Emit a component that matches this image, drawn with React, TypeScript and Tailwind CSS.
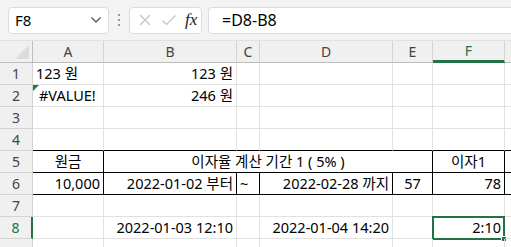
import React from "react";

const font = "font-['Noto_Sans','Noto_Sans_CJK_KR',sans-serif]";

type CellProps = {
  children?: React.ReactNode;
  className?: string;
};

function Cell({ children, className = "" }: CellProps) {
  return (
    <div
      className={`relative flex h-[22px] items-center overflow-visible whitespace-nowrap border-b border-r border-[#e1e1e1] px-[3px] text-[14.5px] leading-none text-black ${className}`}
    >
      {children}
    </div>
  );
}

function RowHead({ n, className = "" }: { n?: number; className?: string }) {
  return (
    <div
      className={`flex h-[22px] items-center justify-center border-b border-r border-[#d4d4d4] bg-[#f0f0f0] text-[14px] text-[#444] ${className}`}
    >
      {n}
    </div>
  );
}

function ColHead({ label, className = "" }: { label: string; className?: string }) {
  return (
    <div
      className={`flex h-[22px] items-center justify-center border-b border-r border-[#d4d4d4] bg-[#f0f0f0] text-[14px] text-[#444] ${className}`}
    >
      {label}
    </div>
  );
}

export default function App() {
  return (
    <div className={`h-[247px] w-[511px] overflow-hidden bg-white ${font}`}>
      {/* formula bar */}
      <div className="flex h-[41px] items-center border-b border-[#e1e1e1] bg-[#f3f3f3] pl-[8px]">
        <div className="flex h-[27px] w-[101px] items-center justify-between rounded-[4px] border border-[#dcdcdc] bg-white pl-[6px] pr-[6px]">
          <span className="text-[15px] text-black">F8</span>
          <svg width="12" height="8" viewBox="0 0 12 8" fill="none" stroke="#555" strokeWidth="1.3">
            <path d="M1.5 1.5 L6 6 L10.5 1.5" />
          </svg>
        </div>
        <div className="mx-[9px] flex flex-col gap-[3px]">
          <span className="h-[2px] w-[2px] bg-[#999]" />
          <span className="h-[2px] w-[2px] bg-[#999]" />
          <span className="h-[2px] w-[2px] bg-[#999]" />
        </div>
        <div className="flex h-[27px] w-[73px] items-center rounded-[4px] border border-[#dcdcdc] bg-white pl-[8px]">
          <svg width="14" height="14" viewBox="0 0 14 14" fill="none" stroke="#c2c2c2" strokeWidth="1.2">
            <path d="M2 2 L12 12 M12 2 L2 12" />
          </svg>
          <svg className="ml-[9px]" width="16" height="14" viewBox="0 0 16 14" fill="none" stroke="#c2c2c2" strokeWidth="1.2">
            <path d="M1.5 7.5 L5.5 11.5 L14.5 2.5" />
          </svg>
          <span className="ml-[8px] font-['Liberation_Serif',serif] text-[17px] italic text-[#222]">fx</span>
        </div>
        <div className="ml-[6px] flex h-[27px] flex-1 items-center rounded-l-[4px] border border-r-0 border-[#dcdcdc] bg-white pl-[13px]">
          <span className="text-[16px] text-black">=D8-B8</span>
        </div>
      </div>

      {/* sheet */}
      <div className="grid grid-cols-[33px_71px_133px_23px_133px_40px_72px_1fr]">
        {/* header */}
        <div className="relative h-[22px] border-b border-r border-[#bdbdbd] bg-[#f0f0f0]">
          <div className="absolute bottom-[3px] right-[3px] h-0 w-0 border-b-[14px] border-l-[14px] border-b-[#dcdcdc] border-l-transparent" />
        </div>
        <ColHead label="A" className="border-b-[#bdbdbd]" />
        <ColHead label="B" className="border-b-[#bdbdbd]" />
        <ColHead label="C" className="border-b-[#bdbdbd]" />
        <ColHead label="D" className="border-b-[#bdbdbd]" />
        <ColHead label="E" className="border-b-[#bdbdbd]" />
        <ColHead label="F" className="border-b-[3px] border-b-[#217346] bg-[#e0e0e0] text-[#217346]" />
        <ColHead label="" className="border-b-[#bdbdbd]" />

        {/* row 1 */}
        <RowHead n={1} />
        <Cell>123 원</Cell>
        <Cell className="justify-end">123 원</Cell>
        <Cell />
        <Cell />
        <Cell />
        <Cell />
        <Cell />

        {/* row 2 */}
        <RowHead n={2} />
        <Cell className="pl-[6px]">
          <div className="absolute left-0 top-0 h-0 w-0 border-r-[6px] border-t-[6px] border-r-transparent border-t-[#1e7b3c]" />
          #VALUE!
        </Cell>
        <Cell className="justify-end">246 원</Cell>
        <Cell />
        <Cell />
        <Cell />
        <Cell />
        <Cell />

        {/* row 3 */}
        <RowHead n={3} />
        <Cell />
        <Cell />
        <Cell />
        <Cell />
        <Cell />
        <Cell />
        <Cell />

        {/* row 4 */}
        <RowHead n={4} />
        <Cell className="border-b-black" />
        <Cell className="border-b-black" />
        <Cell className="border-b-black" />
        <Cell className="border-b-black" />
        <Cell className="border-b-black" />
        <Cell className="border-b-black" />
        <Cell className="border-b-black" />

        {/* row 5 */}
        <RowHead n={5} className="bg-[#9fd5b7]" />
        <Cell className="justify-center border-b-black border-r-black">원금</Cell>
        <Cell className="col-span-4 justify-center border-b-black border-r-black">이자율 계산 기간 1 ( 5% )</Cell>
        <Cell className="justify-center border-b-black border-r-black">이자1</Cell>
        <Cell className="border-b-black" />

        {/* row 6 */}
        <RowHead n={6} />
        <Cell className="justify-end border-b-black border-r-black">10,000</Cell>
        <Cell className="justify-end border-b-black border-r-black">2022-01-02 부터</Cell>
        <Cell className="border-b-black border-r-black">~</Cell>
        <Cell className="justify-end border-b-black border-r-black">2022-02-28 까지</Cell>
        <Cell className="justify-center border-b-black border-r-black">57</Cell>
        <Cell className="justify-end border-b-black border-r-black">78</Cell>
        <Cell className="border-b-black" />

        {/* row 7 */}
        <RowHead n={7} />
        <Cell />
        <Cell />
        <Cell />
        <Cell />
        <Cell />
        <Cell />
        <Cell />

        {/* row 8 */}
        <RowHead n={8} className="border-r-2 border-r-[#217346] bg-[#e0e0e0] text-[#217346]" />
        <Cell />
        <Cell className="justify-end">2022-01-03 12:10</Cell>
        <Cell />
        <Cell className="justify-end">2022-01-04 14:20</Cell>
        <Cell />
        <Cell className="justify-end">
          <div className="absolute -left-[1px] -top-[1px] h-[24px] w-[73px] border-2 border-[#217346]" />
          <div className="absolute -bottom-[4px] -right-[3px] h-[6px] w-[6px] border border-white bg-[#217346]" />
          2:10
        </Cell>
        <Cell />

        {/* row 9 */}
        <RowHead />
        <Cell />
        <Cell />
        <Cell />
        <Cell />
        <Cell />
        <Cell />
        <Cell />
      </div>
    </div>
  );
}
